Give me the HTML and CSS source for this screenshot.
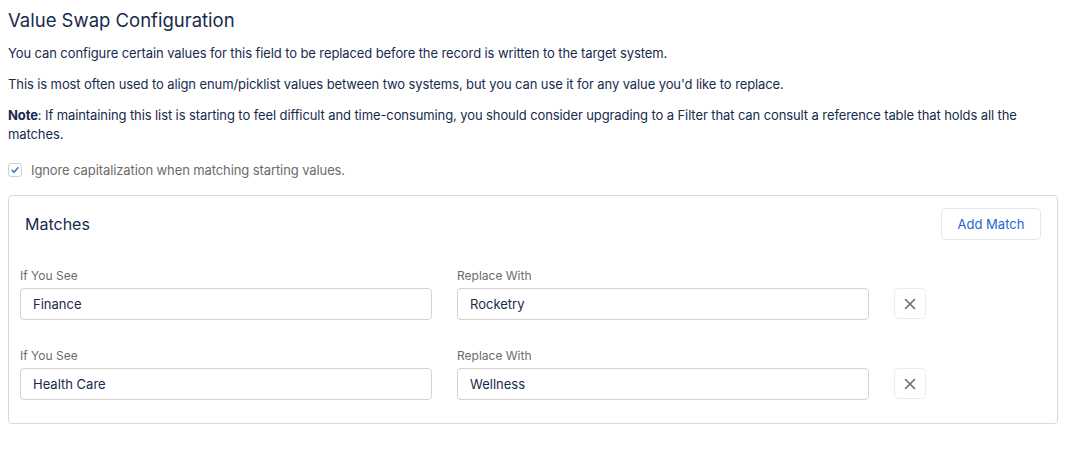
FILE: index.html
```html
<!DOCTYPE html>
<html>
<head>
<meta charset="utf-8">
<link rel="stylesheet" href="styles.css">
</head>
<body>
<main class="page">
<h1 class="title">Value Swap Configuration</h1>
<p class="text">You can configure certain values for this field to be replaced before the record is written to the target system.</p>
<p class="text">This is most often used to align enum/picklist values between two systems, but you can use it for any value you'd like to replace.</p>
<p class="text"><strong>Note</strong>: If maintaining this list is starting to feel difficult and time-consuming, you should consider upgrading to a Filter that can consult a reference table that holds all the matches.</p>
<label class="check-row">
  <span class="checkbox">
    <svg width="10" height="10" viewBox="0 0 10 10"><path d="M2 5.3 L4 7.2 L8 2.8" fill="none" stroke="#2f6fd8" stroke-width="1.5" stroke-linecap="round" stroke-linejoin="round"/></svg>
  </span>
  <span class="check-label">Ignore capitalization when matching starting values.</span>
</label>
<section class="card">
  <div class="card-head">
    <h2 class="card-title">Matches</h2>
    <button class="add-btn">Add Match</button>
  </div>
  <div class="match-row">
    <div class="field">
      <div class="field-label">If You See</div>
      <div class="input">Finance</div>
    </div>
    <div class="field">
      <div class="field-label">Replace With</div>
      <div class="input">Rocketry</div>
    </div>
    <button class="remove-btn"><svg width="12" height="12" viewBox="0 0 12 12"><path d="M1.5 1.5 L10.5 10.5 M10.5 1.5 L1.5 10.5" stroke="#6b6b6b" stroke-width="1.6" stroke-linecap="round"/></svg></button>
  </div>
  <div class="match-row">
    <div class="field">
      <div class="field-label">If You See</div>
      <div class="input">Health Care</div>
    </div>
    <div class="field">
      <div class="field-label">Replace With</div>
      <div class="input">Wellness</div>
    </div>
    <button class="remove-btn"><svg width="12" height="12" viewBox="0 0 12 12"><path d="M1.5 1.5 L10.5 10.5 M10.5 1.5 L1.5 10.5" stroke="#6b6b6b" stroke-width="1.6" stroke-linecap="round"/></svg></button>
  </div>
</section>
</main>
</body>
</html>
```
FILE: styles.css
```css
body {
  margin: 8px;
  font-family: Inter, "Liberation Sans", sans-serif;
  color: #172b4d;
  background: #fff;
}
.page {
  width: 1050px;
}
.title {
  margin: 0;
  font-size: 18.5px;
  line-height: 24px;
  font-weight: 400;
  color: #172b4d;
}
.text {
  margin: 12px 0 0;
  font-size: 13px;
  line-height: 19px;
  letter-spacing: -0.1px;
}
.text strong { font-weight: 700; }
.check-row {
  display: flex;
  align-items: center;
  gap: 9px;
  margin-top: 16px;
  height: 20px;
}
.checkbox {
  width: 14px;
  height: 14px;
  border: 1px solid #cfcfcf;
  border-radius: 3px;
  display: flex;
  align-items: center;
  justify-content: center;
  box-sizing: border-box;
}
.check-label {
  font-size: 13px;
  color: #6b6b6b;
  letter-spacing: -0.1px;
}
.card {
  margin-top: 15px;
  border: 1px solid #d9d9d9;
  border-radius: 4px;
  padding: 12px 16px 23px 11px;
}
.card-head {
  display: flex;
  justify-content: space-between;
  align-items: center;
  padding-left: 5px;
  margin-bottom: 28px;
}
.card-title {
  margin: 0;
  font-size: 16px;
  font-weight: 400;
  color: #172b4d;
}
.add-btn {
  height: 32px;
  width: 100px;
  border: 1px solid #e6e6e6;
  border-radius: 4px;
  background: #fff;
  color: #1f66d1;
  font-family: inherit;
  font-size: 13px;
}
.match-row {
  display: grid;
  grid-template-columns: 412px 412px 32px;
  column-gap: 25px;
  align-items: end;
}
.match-row + .match-row { margin-top: 28px; }
.field-label {
  font-size: 12px;
  line-height: 16px;
  color: #6b6b6b;
  margin-bottom: 4px;
}
.input {
  height: 32px;
  box-sizing: border-box;
  border: 1px solid #d3d3d3;
  border-radius: 4px;
  padding: 0 12px;
  display: flex;
  align-items: center;
  font-size: 13px;
  color: #172b4d;
}
.remove-btn {
  width: 32px;
  height: 31px;
  border: 1px solid #ececec;
  border-radius: 4px;
  background: #fff;
  display: flex;
  align-items: center;
  justify-content: center;
  padding: 0;
  margin-bottom: 1px;
}
```
